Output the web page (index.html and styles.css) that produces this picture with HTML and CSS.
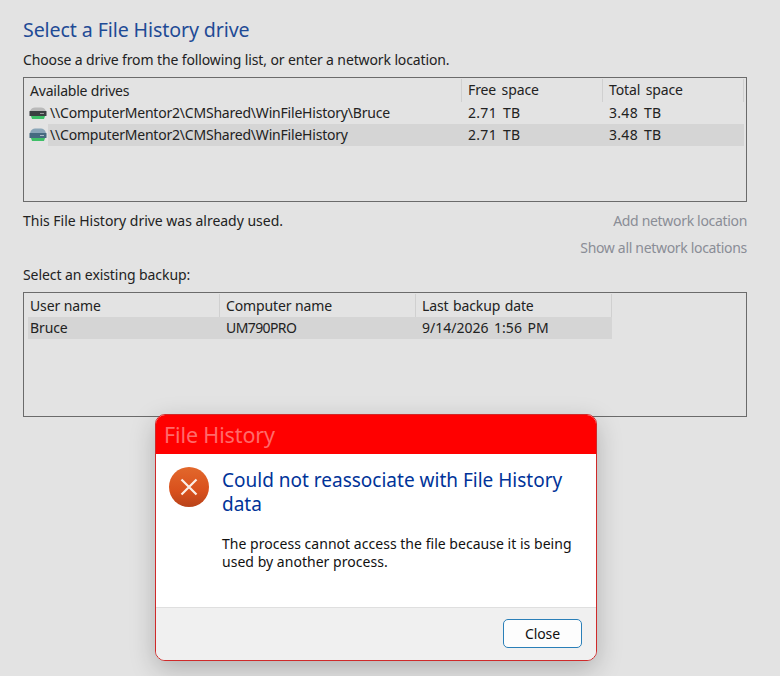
FILE: index.html
```html
<!DOCTYPE html>
<html lang="en">
<head>
<meta charset="utf-8">
<title>Select a File History drive</title>
<link rel="stylesheet" href="styles.css">
</head>
<body>
<main class="panel">
  <h1 class="heading">Select a File History drive</h1>
  <p class="intro">Choose a drive from the following list, or enter a network location.</p>

  <section class="listbox drives">
    <div class="row header">
      <div class="cell name">Available drives</div>
      <div class="cell free">Free space</div>
      <div class="cell total">Total space</div>
    </div>
    <div class="row">
      <div class="cell name">
        <svg class="drive" viewBox="0 0 18 16" aria-hidden="true">
          <path d="M1 6C2 3.500 4 2.500 6 2.500h6c2 0 4 1 5 3.500z" fill="#b9b9b9"/>
          <rect x="0.500" y="6" width="17" height="5" rx="0.500" fill="#3b3f42"/>
          <rect x="11" y="8" width="4" height="1" fill="#9a9a9a"/>
          <path d="M2 11h14l-1 3H3z" fill="#3fbf68"/>
        </svg>
        <span class="path">\\ComputerMentor2\CMShared\WinFileHistory\Bruce</span>
      </div>
      <div class="cell free size">2.71 TB</div>
      <div class="cell total size">3.48 TB</div>
    </div>
    <div class="row selected">
      <div class="cell name">
        <svg class="drive" viewBox="0 0 18 16" aria-hidden="true">
          <path d="M1 6C2 2.500 4 1.500 6 1.500h6c2 0 4 1 5 4.500z" fill="#8aa6b8"/>
          <rect x="0.500" y="6" width="17" height="5" rx="0.500" fill="#456a80"/>
          <rect x="11" y="8" width="4" height="1" fill="#a9bcc8"/>
          <path d="M2 11h14l-1 3H3z" fill="#3fbf68"/>
        </svg>
        <span class="path">\\ComputerMentor2\CMShared\WinFileHistory</span>
      </div>
      <div class="cell free size">2.71 TB</div>
      <div class="cell total size">3.48 TB</div>
    </div>
  </section>

  <div class="status-row">
    <span class="status">This File History drive was already used.</span>
    <a class="link">Add network location</a>
  </div>
  <div class="link-row"><a class="link">Show all network locations</a></div>

  <p class="existing">Select an existing backup:</p>

  <section class="listbox backups">
    <div class="row header">
      <div class="cell user">User name</div>
      <div class="cell computer">Computer name</div>
      <div class="cell date">Last backup date</div>
    </div>
    <div class="row selected">
      <div class="cell user">Bruce</div>
      <div class="cell computer pc">UM790PRO</div>
      <div class="cell date stamp">9/14/2026 1:56 PM</div>
    </div>
  </section>
</main>

<div class="dialog" role="dialog">
  <div class="titlebar">File History</div>
  <div class="dialog-body">
    <svg class="error-icon" viewBox="0 0 40 40" aria-hidden="true">
      <defs>
        <linearGradient id="err" x1="0" y1="0" x2="0" y2="1">
          <stop offset="0" stop-color="#e2682c"/>
          <stop offset="0.6" stop-color="#d9501c"/>
          <stop offset="1" stop-color="#b8431a"/>
        </linearGradient>
      </defs>
      <circle cx="20" cy="20" r="20" fill="url(#err)"/>
      <path d="M12.500 12.500l15 15M27.500 12.500l-15 15" stroke="#fbeee6" stroke-width="2.200" fill="none"/>
    </svg>
    <div class="message">
      <h2 class="message-title">Could not reassociate with File History data</h2>
      <p class="message-text">The process cannot access the file because it is being used by another process.</p>
    </div>
  </div>
  <div class="dialog-footer">
    <button class="close">Close</button>
  </div>
</div>
</body>
</html>
```
FILE: styles.css
```css
* { box-sizing: border-box; }
html, body { margin: 0; height: 100%; }
body {
  width: 780px;
  height: 676px;
  overflow: hidden;
  position: relative;
  background: #e3e3e3;
  color: #222;
  font-family: "Noto Sans", "Open Sans", sans-serif;
  font-size: 14px;
  letter-spacing: -0.12px;
}
.panel {
  padding: 17px 33px 0 23px;
  display: flex;
  flex-direction: column;
}
.heading {
  margin: 0;
  font-size: 19.600px;
  font-weight: 400;
  line-height: 26px;
  color: #1f4b96;
  letter-spacing: -0.1px;
}
.intro {
  margin: 7px 0 0;
  line-height: 20px;
}
.listbox {
  margin-top: 7px;
  height: 125px;
  border: 1px solid #6b6b6b;
  padding: 1px 2px 0 4px;
}
.row {
  display: flex;
  height: 22px;
  line-height: 22px;
  white-space: nowrap;
}
.row.header { height: 23px; word-spacing: 2px; }
.header .cell { border-right: 1px solid #d0d0d0; }
.cell { padding-left: 2px; }
.drives .name { width: 434px; display: flex; align-items: center; padding-left: 1px; }
.drives .header .name { padding-left: 2px; word-spacing: 0; letter-spacing: -0.2px; }
.drives .free { width: 141px; padding-left: 6px; }
.drives .total { width: 141px; padding-left: 6px; }
.path { letter-spacing: -0.21px; }
.size { letter-spacing: 0.3px; word-spacing: 2px; }
.backups .user { width: 192px; }
.backups .computer { width: 196px; padding-left: 6px; }
.backups .date { width: 196px; padding-left: 6px; }
.backups .header .user, .backups .header .computer { word-spacing: 0; }
.backups .header .date { word-spacing: 1px; }
.row.selected { background: #d5d5d5; }
.drives .row.selected { background: linear-gradient(to right, transparent 20px, #d5d5d5 20px); }
.backups .row.selected { width: 584px; }
.backups .row.header { line-height: 24px; }
.pc { letter-spacing: -0.6px; }
.stamp { letter-spacing: 0; word-spacing: 2px; }
.drive { width: 18px; height: 16px; margin-right: 3px; flex: none; }
.status-row {
  display: flex;
  justify-content: space-between;
  margin-top: 9px;
  line-height: 20px;
}
.status { letter-spacing: -0.02px; }
.link-row {
  display: flex;
  justify-content: flex-end;
  margin-top: 7px;
  line-height: 20px;
}
.link { color: #8a8d96; letter-spacing: -0.32px; }
.existing {
  margin: 7px 0 0;
  line-height: 20px;
  letter-spacing: -0.08px;
}
.backups { margin-top: 7px; }

.dialog {
  position: absolute;
  left: 155px;
  top: 414px;
  width: 442px;
  height: 247px;
  border: 1px solid #cf2a2a;
  border-radius: 10px;
  overflow: hidden;
  background: #fff;
  display: flex;
  flex-direction: column;
  box-shadow: 0 8px 26px rgba(0, 0, 0, 0.22);
}
.titlebar {
  height: 40px;
  background: #ff0000;
  color: #ff6a6a;
  font-size: 21.500px;
  line-height: 41px;
  padding-left: 9px;
  margin: -1px -1px 0;
  flex: none;
}
.dialog-body {
  flex: 1;
  display: flex;
  padding: 13px 16px 0 13px;
  background: #fff;
}
.error-icon { width: 40px; height: 40px; flex: none; }
.message { margin-left: 13px; padding-top: 1px; }
.message-title {
  margin: 0;
  font-size: 19px;
  font-weight: 400;
  line-height: 24px;
  color: #003399;
  letter-spacing: 0;
}
.message-text {
  margin: 19px 0 0;
  line-height: 18px;
  color: #111;
  letter-spacing: 0.03px;
}
.dialog-footer {
  height: 53px;
  flex: none;
  background: #f0f0f0;
  border-top: 1px solid #dfdfdf;
  display: flex;
  justify-content: flex-end;
  padding: 11px 14px 0 0;
}
.close {
  width: 79px;
  height: 29px;
  border: 1px solid #2a7fb8;
  border-radius: 5px;
  background: #fdfdfd;
  color: #111;
  font: inherit;
  letter-spacing: inherit;
  padding: 0;
}
```
